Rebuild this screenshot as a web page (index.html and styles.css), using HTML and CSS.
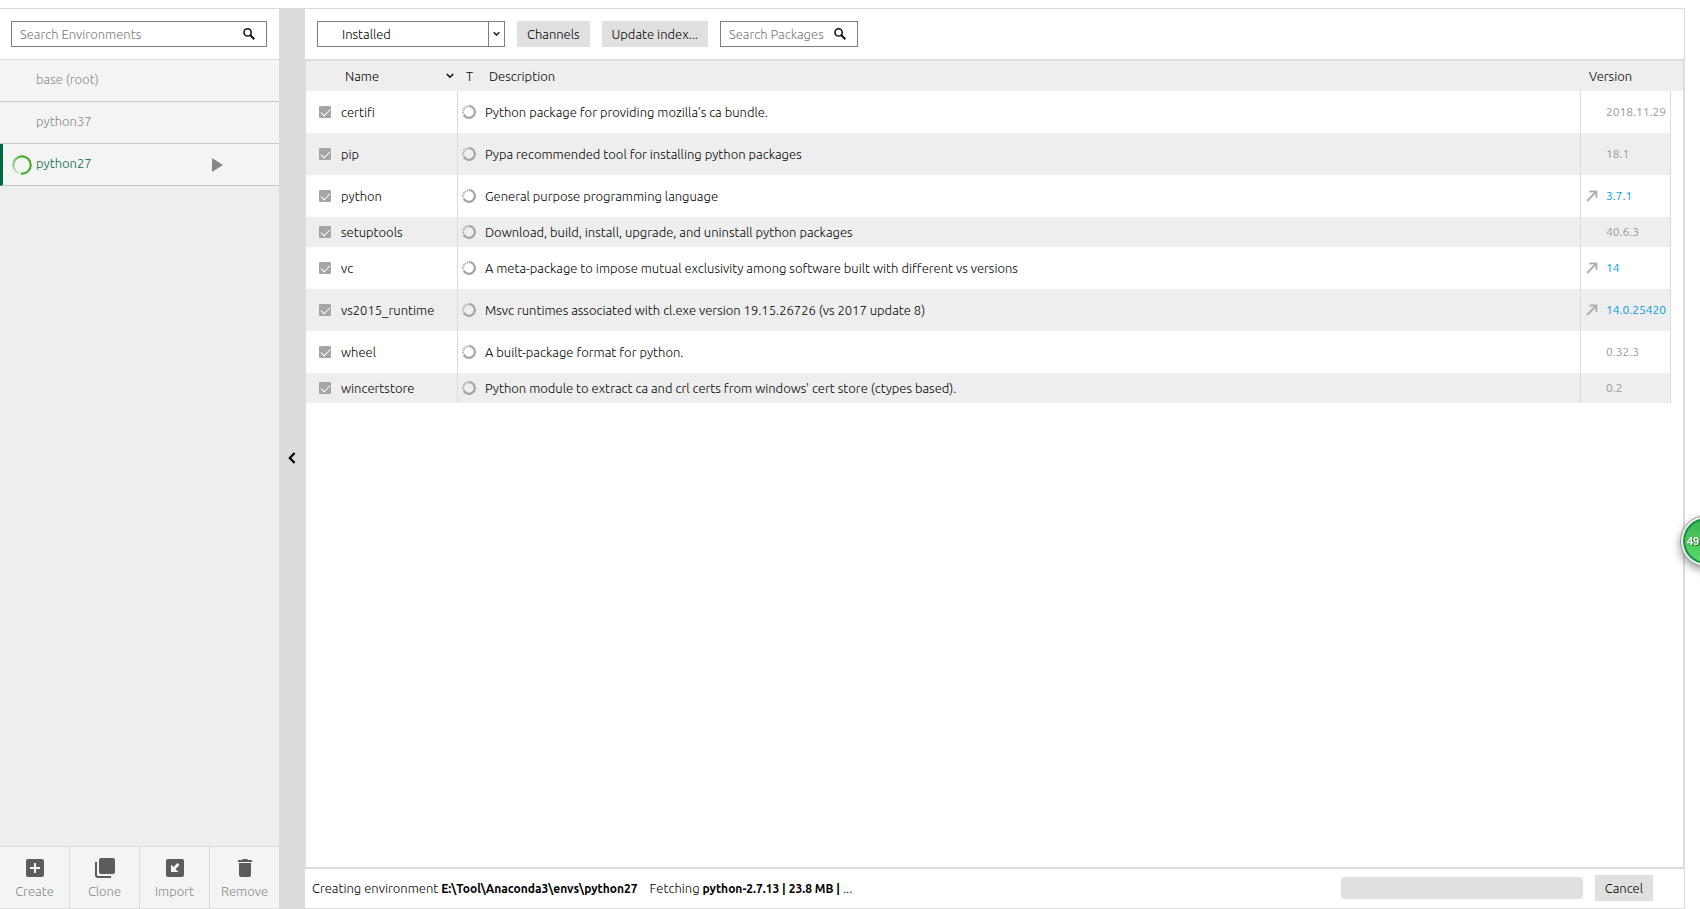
FILE: index.html
```html
<!doctype html>
<html lang="en">
    <head>
        <meta charset="utf-8" />
        <title>Environments</title>
        <link rel="stylesheet" href="styles.css" />
    </head>
    <body>
        <svg class="sprite" aria-hidden="true">
            <symbol id="search" viewBox="0 0 12 12">
                <circle cx="4.6" cy="4.4" r="3.6" fill="none" stroke="#111" stroke-width="1.6" />
                <path d="M7.2 7L11.3 11.2" fill="none" stroke="#111" stroke-width="2" />
            </symbol>
            <symbol id="down" viewBox="0 0 8 6">
                <path d="M0.8 1L4 4.2L7.2 1" fill="none" stroke="#111" stroke-width="1.6" />
            </symbol>
            <symbol id="type" viewBox="0 0 14 14">
                <path d="M7 1.2a5.8 5.8 0 1 1-5.3 8.2" fill="none" stroke="#a5a5a5" stroke-width="2.3" />
                <path d="M1.3 8.2A5.8 5.8 0 0 1 7 1.2" fill="none" stroke="#999" stroke-width="2" stroke-dasharray="1 1" />
            </symbol>
            <symbol id="upgrade" viewBox="0 0 12 12">
                <path d="M1 11L10 2M3.5 1.5H10.5V8" fill="none" stroke="#adadad" stroke-width="1.8" />
            </symbol>
        </svg>

        <div class="app">
            <aside class="sidebar">
                <div class="toolbar">
                    <label class="search env-search">
                        <input type="text" placeholder="Search Environments" aria-label="Search Environments" />
                        <svg class="search-icon"><use href="#search" /></svg>
                    </label>
                </div>
                <ul class="env-list">
                    <li><a class="env" href="#">base (root)</a></li>
                    <li><a class="env" href="#">python37</a></li>
                    <li class="active">
                        <span class="spinner"></span>
                        <a class="env" href="#">python27</a>
                        <button class="play" aria-label="Open python27">
                            <svg viewBox="0 0 11 14"><path d="M0 0L11 7L0 14z" fill="#888" /></svg>
                        </button>
                    </li>
                </ul>
                <div class="env-actions">
                    <button>
                        <svg viewBox="0 0 20 20">
                            <rect x="1" y="1" width="18" height="18" rx="2" fill="#5c5c5c" />
                            <path d="M10 5v10M5 10h10" stroke="#f4f4f4" stroke-width="2" />
                        </svg>
                        Create
                    </button>
                    <button>
                        <svg viewBox="0 0 20 20">
                            <rect x="4" y="0" width="16" height="16" rx="2" fill="#5c5c5c" />
                            <path d="M1 4v13a2 2 0 0 0 2 2h13" fill="none" stroke="#5c5c5c" stroke-width="2" />
                        </svg>
                        Clone
                    </button>
                    <button>
                        <svg viewBox="0 0 20 20">
                            <rect x="1" y="1" width="18" height="18" rx="2" fill="#5c5c5c" />
                            <path d="M13.5 6L7.5 12" stroke="#f4f4f4" stroke-width="3" />
                            <path d="M6 6.5V14h7.5z" fill="#f4f4f4" />
                        </svg>
                        Import
                    </button>
                    <button>
                        <svg viewBox="0 0 20 20">
                            <path d="M3 2h4l1-1h4l1 1h4v2H3z" fill="#5c5c5c" />
                            <path d="M4 5h12v12a2 2 0 0 1-2 2H6a2 2 0 0 1-2-2z" fill="#5c5c5c" />
                        </svg>
                        Remove
                    </button>
                </div>
            </aside>

            <button class="collapse" aria-label="Collapse">
                <svg viewBox="0 0 8 12"><path d="M6.6 1L1.8 6L6.6 11" fill="none" stroke="#000" stroke-width="2.2" /></svg>
            </button>

            <main class="packages">
                <div class="toolbar">
                    <div class="filter">
                        <select aria-label="Filter">
                            <option>Installed</option>
                        </select>
                        <svg class="filter-arrow"><use href="#down" /></svg>
                    </div>
                    <button class="btn">Channels</button>
                    <button class="btn">Update index...</button>
                    <label class="search pkg-search">
                        <input type="text" placeholder="Search Packages" aria-label="Search Packages" />
                        <svg class="search-icon"><use href="#search" /></svg>
                    </label>
                </div>

                <div class="table-wrap">
                    <table>
                        <colgroup>
                            <col class="col-name" />
                            <col class="col-type" />
                            <col />
                            <col class="col-version" />
                            <col class="col-end" />
                        </colgroup>
                        <thead>
                            <tr>
                                <th class="name">
                                    <div class="sort">Name <svg class="sort-icon"><use href="#down" /></svg></div>
                                </th>
                                <th class="type">T</th>
                                <th class="desc">Description</th>
                                <th class="version">Version</th>
                                <th></th>
                            </tr>
                        </thead>
                        <tbody>
                            <tr>
                                <td class="name"><label><input type="checkbox" checked />certifi</label></td>
                                <td class="type"><svg><use href="#type" /></svg></td>
                                <td class="desc">Python package for providing mozilla's ca bundle.</td>
                                <td class="version">2018.11.29</td>
                                <td class="end"></td>
                            </tr>
                            <tr>
                                <td class="name"><label><input type="checkbox" checked />pip</label></td>
                                <td class="type"><svg><use href="#type" /></svg></td>
                                <td class="desc">Pypa recommended tool for installing python packages</td>
                                <td class="version">18.1</td>
                                <td class="end"></td>
                            </tr>
                            <tr>
                                <td class="name"><label><input type="checkbox" checked />python</label></td>
                                <td class="type"><svg><use href="#type" /></svg></td>
                                <td class="desc">General purpose programming language</td>
                                <td class="version upgradable"><div><svg><use href="#upgrade" /></svg>3.7.1</div></td>
                                <td class="end"></td>
                            </tr>
                            <tr class="short">
                                <td class="name"><label><input type="checkbox" checked />setuptools</label></td>
                                <td class="type"><svg><use href="#type" /></svg></td>
                                <td class="desc">Download, build, install, upgrade, and uninstall python packages</td>
                                <td class="version">40.6.3</td>
                                <td class="end"></td>
                            </tr>
                            <tr>
                                <td class="name"><label><input type="checkbox" checked />vc</label></td>
                                <td class="type"><svg><use href="#type" /></svg></td>
                                <td class="desc">A meta-package to impose mutual exclusivity among software built with different vs versions</td>
                                <td class="version upgradable"><div><svg><use href="#upgrade" /></svg>14</div></td>
                                <td class="end"></td>
                            </tr>
                            <tr>
                                <td class="name"><label><input type="checkbox" checked />vs2015_runtime</label></td>
                                <td class="type"><svg><use href="#type" /></svg></td>
                                <td class="desc">Msvc runtimes associated with cl.exe version 19.15.26726 (vs 2017 update 8)</td>
                                <td class="version upgradable"><div><svg><use href="#upgrade" /></svg>14.0.25420</div></td>
                                <td class="end"></td>
                            </tr>
                            <tr>
                                <td class="name"><label><input type="checkbox" checked />wheel</label></td>
                                <td class="type"><svg><use href="#type" /></svg></td>
                                <td class="desc">A built-package format for python.</td>
                                <td class="version">0.32.3</td>
                                <td class="end"></td>
                            </tr>
                            <tr class="short">
                                <td class="name"><label><input type="checkbox" checked />wincertstore</label></td>
                                <td class="type"><svg><use href="#type" /></svg></td>
                                <td class="desc">Python module to extract ca and crl certs from windows' cert store (ctypes based).</td>
                                <td class="version">0.2</td>
                                <td class="end"></td>
                            </tr>
                        </tbody>
                    </table>
                </div>

                <div class="status">
                    <span>Creating environment <b>E:\Tool\Anaconda3\envs\python27</b></span>
                    <span>Fetching <b>python-2.7.13 | 23.8 MB |</b> ...</span>
                    <progress value="0" max="100" aria-label="Progress"></progress>
                    <button class="btn">Cancel</button>
                </div>
            </main>
        </div>

        <div class="monitor">49</div>
    </body>
</html>
```

FILE: styles.css
```css
* {
    box-sizing: border-box;
}
body {
    margin: 0;
    background: #fff;
    color: #000;
    font-family: Ubuntu, "Noto Sans", sans-serif;
    font-size: 13px;
    font-weight: 300;
    line-height: 16px;
}
button,
input,
select {
    margin: 0;
    padding: 0;
    border: none;
    background: none;
    color: inherit;
    font: inherit;
}
button {
    cursor: pointer;
}
b {
    font-size: 12px;
    font-weight: 700;
}
svg {
    display: block;
    flex: none;
}
.sprite {
    position: absolute;
    width: 0;
    height: 0;
}

.app {
    display: flex;
    height: 100vh;
    border-top: 8px solid #fff;
    margin-right: 15px;
}
.toolbar {
    display: flex;
    gap: 12px;
    padding: 12px 12px 12px 11px;
    border-top: 1px solid #dcdcdc;
    background: #fff;
}
.search {
    display: flex;
    align-items: center;
    height: 26px;
    padding: 0 11px 0 8px;
    border: 1px solid #7d7d7d;
}
.search input {
    flex: 1;
    min-width: 0;
    outline: none;
}
.search input::placeholder {
    color: #777;
    opacity: 1;
}
.search-icon {
    width: 12px;
    height: 12px;
}
.env-search {
    flex: 1;
}
.pkg-search {
    width: 138px;
}
.btn {
    height: 26px;
    padding: 0 10px;
    background: #e0e0e0;
}

/* environments */
.sidebar {
    display: flex;
    flex-direction: column;
    width: 279px;
    background: #eee;
    border-bottom: 1px solid #dcdcdc;
}
.env-list {
    flex: 1;
    margin: 0;
    padding: 0;
    border-top: 1px solid #dcdcdc;
    list-style: none;
}
.env-list li {
    display: flex;
    align-items: center;
    height: 42px;
    padding: 0 56px 0 36px;
    border-bottom: 1px solid #c8c8c8;
    background: #f4f4f4;
}
.env {
    flex: 1;
    padding-bottom: 4px;
    color: #888;
    text-decoration: none;
}
.env-list .active {
    padding-left: 9px;
    border-left: 3px solid #00693e;
}
.active .env {
    color: #00693e;
}
.spinner {
    width: 20px;
    height: 20px;
    margin-right: 4px;
    border-radius: 50%;
    background: conic-gradient(from 185deg, #43b02a11, #43b02a 50%);
    mask: radial-gradient(circle, transparent 7px, #000 8px);
}
.play svg {
    width: 11px;
    height: 14px;
}
.env-actions {
    display: flex;
    border-top: 1px solid #dcdcdc;
    background: #f4f4f4;
}
.env-actions button {
    display: flex;
    flex: 1;
    flex-direction: column;
    align-items: center;
    gap: 5px;
    height: 61px;
    padding-top: 11px;
    color: #888;
}
.env-actions button + button {
    border-left: 1px solid #dcdcdc;
}
.env-actions svg {
    width: 20px;
    height: 20px;
}
.collapse {
    display: flex;
    align-items: center;
    justify-content: center;
    width: 26px;
    padding-bottom: 2px;
    background: #dcdcdc;
}
.collapse svg {
    width: 8px;
    height: 12px;
}

/* packages */
.packages {
    display: flex;
    flex: 1;
    flex-direction: column;
    min-width: 0;
    border-right: 1px solid #dcdcdc;
    border-bottom: 1px solid #dcdcdc;
}
.packages .toolbar {
    padding-left: 12px;
}
.filter {
    display: flex;
    align-items: center;
    width: 188px;
    height: 26px;
    border: 1px solid #7d7d7d;
}
.filter select {
    flex: 1;
    height: 24px;
    padding-left: 24px;
    border-right: 1px solid #7d7d7d;
    appearance: none;
}
.filter-arrow {
    width: 7px;
    height: 6px;
    margin: 0 4px;
}
.table-wrap {
    flex: 1;
    min-height: 0;
    border: 2px solid #dcdcdc;
    border-width: 2px 1px;
}
table {
    width: 100%;
    border-spacing: 0;
    table-layout: fixed;
}
.col-name {
    width: 152px;
}
.col-type {
    width: 23px;
}
.col-version {
    width: 90px;
}
.col-end {
    width: 12px;
}
th,
td {
    padding: 0;
    text-align: left;
    white-space: nowrap;
}
th {
    height: 30px;
    background: #eee;
    font-weight: inherit;
}
td {
    height: 42px;
}
.short td {
    height: 30px;
}
tbody tr:nth-child(even) td {
    background: #eee;
}
tbody tr .name,
tbody tr .desc,
tbody tr .version {
    border-right: 1px solid #dcdcdc;
}
tbody tr .end.end {
    background: #fff;
}
th.name {
    padding: 0 4px 0 39px;
}
.sort {
    display: flex;
    align-items: center;
    justify-content: space-between;
}
.sort-icon {
    width: 8px;
    height: 6px;
}
td.name {
    padding-left: 13px;
}
.name label {
    display: flex;
    align-items: center;
    gap: 10px;
}
input[type="checkbox"] {
    display: grid;
    place-items: center;
    width: 12px;
    height: 12px;
    border-radius: 1px;
    background: #a5a5a5;
    appearance: none;
}
input[type="checkbox"]:checked::before {
    content: "";
    width: 8px;
    height: 4px;
    margin-bottom: 2px;
    border: solid #fff;
    border-width: 0 0 1px 1px;
    transform: rotate(-45deg);
}
.type {
    padding-left: 4px;
}
th.type {
    padding-left: 8px;
}
.type svg {
    width: 14px;
    height: 14px;
}
.desc {
    padding-left: 4px;
}
th.desc {
    padding-left: 8px;
}
td.version {
    padding-left: 25px;
    color: #999;
    font-size: 12px;
    font-weight: 400;
}
th.version {
    padding-left: 8px;
}
td.upgradable {
    padding-left: 5px;
    color: #009ddc;
}
.upgradable div {
    display: flex;
    align-items: center;
    gap: 8px;
}
.upgradable svg {
    width: 12px;
    height: 12px;
}

.status {
    display: flex;
    align-items: center;
    gap: 12px;
    padding: 6px 31px 7px 7px;
}
.status progress {
    width: 242px;
    height: 22px;
    margin-left: auto;
    border: none;
    border-radius: 4px;
    background: #e0e0e0;
    appearance: none;
}
.status progress::-webkit-progress-bar {
    background: none;
}

/* floating monitor ball, half off the window edge */
.monitor {
    position: fixed;
    top: 516px;
    right: -31px;
    width: 50px;
    height: 50px;
    padding-left: 4px;
    border: 2px solid #eee;
    border-radius: 50%;
    outline: 1px solid #999;
    background: linear-gradient(#3bb54e, #5ddb6c);
    box-shadow:
        -1px 4px 8px #0006,
        inset 0 0 0 2px #188a4a;
    color: #fff;
    font: bold 11px/46px "Liberation Sans", sans-serif;
    text-shadow: 1px 1px 1px #1a6b2c;
}
```
